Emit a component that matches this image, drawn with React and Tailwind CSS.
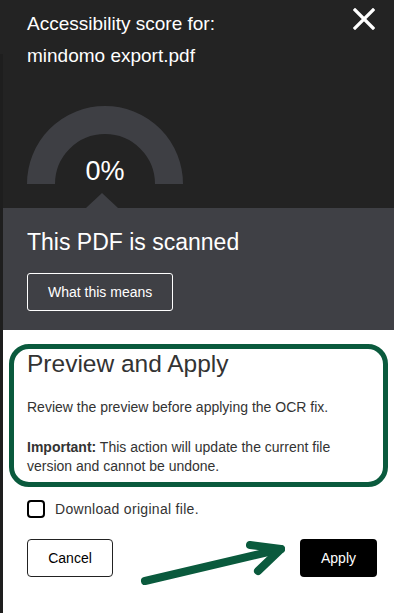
import React from 'react';

const font = { fontFamily: '"Liberation Sans", Arial, sans-serif' };

function Gauge() {
  return (
    <div className="relative w-[156px] h-[78px]">
      <svg width="156" height="78" viewBox="0 0 156 78">
        <path d="M 14 78 A 64 64 0 0 1 142 78" fill="none" stroke="#3e3f44" strokeWidth="28" />
      </svg>
      <div className="absolute left-0 right-0 top-[52px] text-center text-[27px] leading-[27px] text-white">
        0%
      </div>
    </div>
  );
}

function CloseIcon() {
  return (
    <svg width="22" height="22" viewBox="0 0 22 22" className="-mt-1">
      <path d="M2 2 L20 20 M20 2 L2 20" stroke="white" strokeWidth="3.2" strokeLinecap="square" />
    </svg>
  );
}

export default function App() {
  return (
    <div className="relative w-[394px] h-[613px] overflow-hidden flex bg-[#1e1e1e]" style={font}>
      {/* page behind the panel */}
      <div className="w-[3px] flex flex-col">
        <div className="h-[54px] bg-[#232323]" />
      </div>

      <div className="flex-1 flex flex-col bg-white">
        {/* Score header */}
        <div className="h-[208px] bg-[#232323] pt-3 flex flex-col">
          <div className="flex items-start justify-between pl-6 pr-[19px]">
            <span className="text-[19px] leading-6 text-white">Accessibility score for:</span>
            <CloseIcon />
          </div>
          <div className="pl-6 mt-2 text-[19px] leading-6 text-white">mindomo export.pdf</div>
          <div className="pl-6 mt-[38px]">
            <Gauge />
          </div>
          <div className="mt-auto ml-[83px] w-0 h-0 border-l-[16px] border-r-[16px] border-b-[15px] border-l-transparent border-r-transparent border-b-[#3f4045]" />
        </div>

        {/* Scanned notice */}
        <div className="h-[122px] bg-[#3f4045] pl-6 pt-5 flex flex-col items-start">
          <h2 className="text-[23px] leading-7 text-white">This PDF is scanned</h2>
          <button className="mt-[17px] h-[38px] px-[20px] border border-white rounded-[3px] text-sm text-white">
            What this means
          </button>
        </div>

        {/* OCR confirmation */}
        <div className="pt-[14px] flex flex-col">
          <div className="mx-[6px] h-[143px] border-[5px] border-[#0a5a3d] rounded-[20px] pl-[13px] pr-3 pt-px text-[#333]">
            <h3 className="text-[24.5px] leading-7">Preview and Apply</h3>
            <p className="mt-5 text-sm leading-[19px]">Review the preview before applying the OCR fix.</p>
            <p className="mt-[21px] text-sm leading-[19px]">
              <b>Important:</b> This action will update the current file version and cannot be undone.
            </p>
          </div>

          <label className="mt-3 pl-6 flex items-center gap-[10px] text-sm text-[#333]">
            <span className="w-[18px] h-[18px] border-2 border-black rounded-[4px]" />
            <span className="tracking-[0.3px]">Download original file.</span>
          </label>

          <div className="mt-5 pl-6 pr-[17px] flex justify-between">
            <button className="h-[38px] w-[86px] border border-[#222] rounded-[4px] text-sm text-black">
              Cancel
            </button>
            <button className="h-[38px] w-[77px] bg-black rounded-[4px] text-sm text-white">Apply</button>
          </div>
        </div>
      </div>

      {/* annotation arrow */}
      <svg className="absolute left-0 top-0 pointer-events-none" width="394" height="613">
        <g fill="none" stroke="#0a5a3d" strokeWidth="8" strokeLinecap="round" strokeLinejoin="round">
          <path d="M145 581 L281 549" />
          <path d="M250 545 L281 549 L258 571" />
        </g>
      </svg>
    </div>
  );
}
